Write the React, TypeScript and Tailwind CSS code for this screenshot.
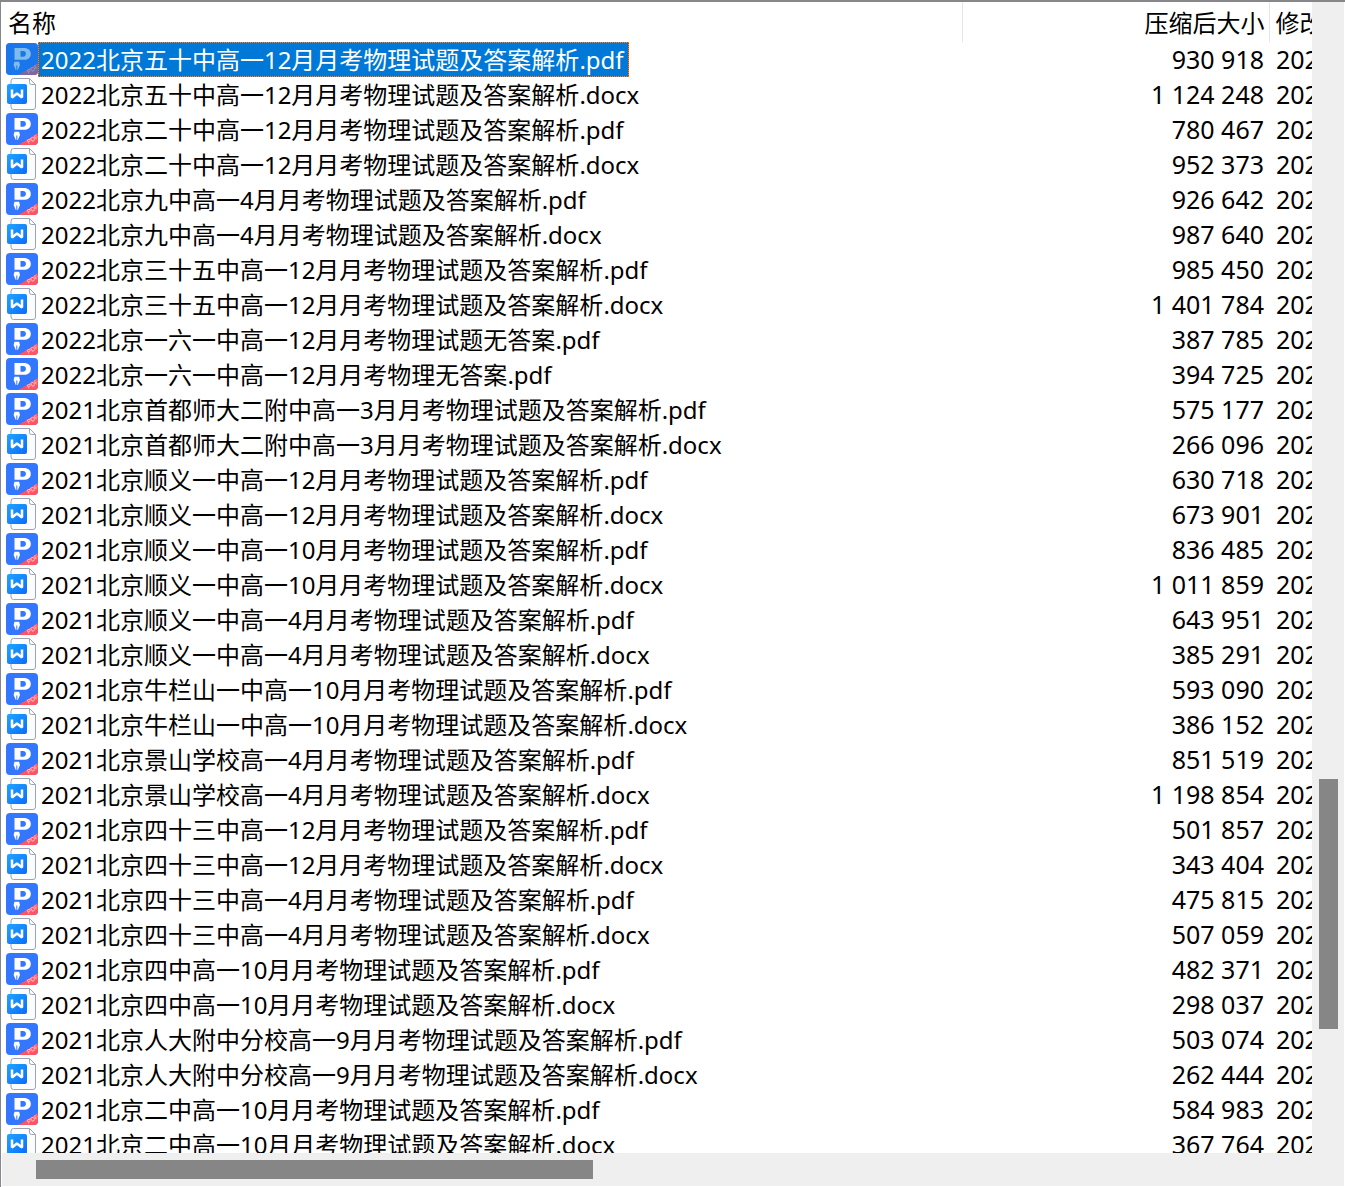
import clsx from "clsx";

type FileType = "pdf" | "docx";

interface ArchiveEntry {
    name: string;
    type: FileType;
    size: string;
    modified: string;
}

const entries: ArchiveEntry[] = [
    { name: "2022北京五十中高一12月月考物理试题及答案解析", type: "pdf", size: "930 918", modified: "2022" },
    { name: "2022北京五十中高一12月月考物理试题及答案解析", type: "docx", size: "1 124 248", modified: "2022" },
    { name: "2022北京二十中高一12月月考物理试题及答案解析", type: "pdf", size: "780 467", modified: "2022" },
    { name: "2022北京二十中高一12月月考物理试题及答案解析", type: "docx", size: "952 373", modified: "2022" },
    { name: "2022北京九中高一4月月考物理试题及答案解析", type: "pdf", size: "926 642", modified: "2022" },
    { name: "2022北京九中高一4月月考物理试题及答案解析", type: "docx", size: "987 640", modified: "2022" },
    { name: "2022北京三十五中高一12月月考物理试题及答案解析", type: "pdf", size: "985 450", modified: "2022" },
    { name: "2022北京三十五中高一12月月考物理试题及答案解析", type: "docx", size: "1 401 784", modified: "2022" },
    { name: "2022北京一六一中高一12月月考物理试题无答案", type: "pdf", size: "387 785", modified: "2022" },
    { name: "2022北京一六一中高一12月月考物理无答案", type: "pdf", size: "394 725", modified: "2022" },
    { name: "2021北京首都师大二附中高一3月月考物理试题及答案解析", type: "pdf", size: "575 177", modified: "2022" },
    { name: "2021北京首都师大二附中高一3月月考物理试题及答案解析", type: "docx", size: "266 096", modified: "2022" },
    { name: "2021北京顺义一中高一12月月考物理试题及答案解析", type: "pdf", size: "630 718", modified: "2022" },
    { name: "2021北京顺义一中高一12月月考物理试题及答案解析", type: "docx", size: "673 901", modified: "2022" },
    { name: "2021北京顺义一中高一10月月考物理试题及答案解析", type: "pdf", size: "836 485", modified: "2022" },
    { name: "2021北京顺义一中高一10月月考物理试题及答案解析", type: "docx", size: "1 011 859", modified: "2022" },
    { name: "2021北京顺义一中高一4月月考物理试题及答案解析", type: "pdf", size: "643 951", modified: "2022" },
    { name: "2021北京顺义一中高一4月月考物理试题及答案解析", type: "docx", size: "385 291", modified: "2022" },
    { name: "2021北京牛栏山一中高一10月月考物理试题及答案解析", type: "pdf", size: "593 090", modified: "2022" },
    { name: "2021北京牛栏山一中高一10月月考物理试题及答案解析", type: "docx", size: "386 152", modified: "2022" },
    { name: "2021北京景山学校高一4月月考物理试题及答案解析", type: "pdf", size: "851 519", modified: "2022" },
    { name: "2021北京景山学校高一4月月考物理试题及答案解析", type: "docx", size: "1 198 854", modified: "2022" },
    { name: "2021北京四十三中高一12月月考物理试题及答案解析", type: "pdf", size: "501 857", modified: "2022" },
    { name: "2021北京四十三中高一12月月考物理试题及答案解析", type: "docx", size: "343 404", modified: "2022" },
    { name: "2021北京四十三中高一4月月考物理试题及答案解析", type: "pdf", size: "475 815", modified: "2022" },
    { name: "2021北京四十三中高一4月月考物理试题及答案解析", type: "docx", size: "507 059", modified: "2022" },
    { name: "2021北京四中高一10月月考物理试题及答案解析", type: "pdf", size: "482 371", modified: "2022" },
    { name: "2021北京四中高一10月月考物理试题及答案解析", type: "docx", size: "298 037", modified: "2022" },
    { name: "2021北京人大附中分校高一9月月考物理试题及答案解析", type: "pdf", size: "503 074", modified: "2022" },
    { name: "2021北京人大附中分校高一9月月考物理试题及答案解析", type: "docx", size: "262 444", modified: "2022" },
    { name: "2021北京二中高一10月月考物理试题及答案解析", type: "pdf", size: "584 983", modified: "2022" },
    { name: "2021北京二中高一10月月考物理试题及答案解析", type: "docx", size: "367 764", modified: "2022" },
];

function PdfIcon({ selected }: { selected: boolean }) {
    return (
        <svg viewBox="0 0 32 32" className="size-8 shrink-0" aria-hidden="true">
            <rect width="32" height="32" rx="4" fill="#3377ff" />
            <path d="M12.5 32 32 20v8a4 4 0 0 1-4 4z" fill="#ff5563" />
            <path fillRule="evenodd" d="M8.500 5H18c4 0 6.800 2.200 6.800 5.900s-2.800 5.900-6.800 5.900H8.500zM14.500 8v5.700h2.700c1.700 0 2.700-1 2.700-2.850S18.900 8 17.200 8z" fill="#fff" />
            <path d="M8.500 18.800h4.600l.9 3.200-2.200 5h-2l-2.200-5z" fill="#fff" />
            <path d="M10.800 22.500V27" stroke="#3377ff" strokeWidth="1" />
            <text x="22.500" y="31" fontSize="6" fill="#fff" fillOpacity="0.800" transform="rotate(-31 22.500 31)" fontFamily="Liberation Sans, sans-serif">PDF</text>
            {selected && <rect width="32" height="32" rx="4" fill="#0078d7" fillOpacity="0.500" />}
        </svg>
    );
}

function DocxIcon() {
    return (
        <svg viewBox="0 0 32 32" className="size-8 shrink-0" aria-hidden="true">
            <defs>
                <linearGradient id="docx-blue" x1="0" y1="0" x2="1" y2="1">
                    <stop offset="0" stopColor="#20a4ff" />
                    <stop offset="1" stopColor="#0a6cff" />
                </linearGradient>
            </defs>
            <path d="M7.500.5h16l6 6V29a2.500 2.500 0 0 1-2.500 2.500H7.500A2.500 2.500 0 0 1 5 29V3A2.500 2.500 0 0 1 7.500.5z" fill="#fbfcfd" stroke="#9ba3b4" />
            <path d="M23.500.5v4a2 2 0 0 0 2 2h4" fill="none" stroke="#9ba3b4" />
            <rect x="1" y="6" width="20" height="20" rx="2" fill="url(#docx-blue)" />
            <path d="M6 11.500v8l5-4 5 4v-8" fill="none" stroke="#fff" strokeWidth="2.500" strokeLinejoin="bevel" />
        </svg>
    );
}

function FileRow({ entry, selected }: { entry: ArchiveEntry; selected: boolean }) {
    return (
        <tr className="h-[35px]" aria-selected={selected}>
            <td className="p-0 pl-[5px]">
                <div className="flex h-[35px]">
                    <div className="pt-px">
                        {entry.type === "pdf" ? <PdfIcon selected={selected} /> : <DocxIcon />}
                    </div>
                    <span
                        className={clsx(
                            "h-[35px] whitespace-nowrap border border-dotted pl-0.5 pr-1 leading-[33px]",
                            selected ? "border-[#ff8728] bg-[#0078d7] text-white" : "border-transparent"
                        )}
                    >
                        {entry.name}.{entry.type}
                    </span>
                </div>
            </td>
            <td className="p-0 pr-[5px] text-right text-[25px] leading-[35px]">{entry.size}</td>
            <td className="overflow-hidden p-0 pl-[7px] text-[25px] leading-[35px]">{entry.modified}</td>
        </tr>
    );
}

export default function App() {
    return (
        <main className="flex h-screen flex-col overflow-hidden border-l border-t-2 border-l-[#828790] border-t-[#878789] bg-white pb-px pr-px font-['Noto_Sans','Noto_Sans_CJK_SC',sans-serif] text-2xl text-black">
            <div className="flex min-h-0 flex-1">
                <div className="min-w-0 flex-1 overflow-hidden">
                    <table className="w-full table-fixed border-collapse">
                        <colgroup>
                            <col />
                            <col className="w-[307px]" />
                            <col className="w-[43px]" />
                        </colgroup>
                        <thead>
                            <tr className="h-10 text-left leading-[38px]">
                                <th className="border-r border-[#e5e5e5] p-0 pl-[7px] pt-0.5 font-normal">名称</th>
                                <th className="border-r border-[#e5e5e5] p-0 pr-1 pt-0.5 text-right font-normal">压缩后大小</th>
                                <th className="overflow-hidden whitespace-nowrap p-0 pl-1.5 pt-0.5 font-normal">修改</th>
                            </tr>
                        </thead>
                        <tbody>
                            {entries.map((entry, index) => (
                                <FileRow key={index} entry={entry} selected={index === 0} />
                            ))}
                        </tbody>
                    </table>
                </div>
                {/* vertical scrollbar */}
                <div className="flex w-8 shrink-0 flex-col bg-[#efefef] pl-[7px] pr-1.5">
                    <div className="grow-[777]" />
                    <div className="h-[250px] bg-[#868686]" />
                    <div className="grow-[124]" />
                </div>
            </div>
            {/* horizontal scrollbar */}
            <div className="ml-px flex h-[33px] shrink-0 bg-[#efefef] py-[7px]">
                <div className="ml-[34px] w-[557px] bg-[#868686]" />
            </div>
        </main>
    );
}
